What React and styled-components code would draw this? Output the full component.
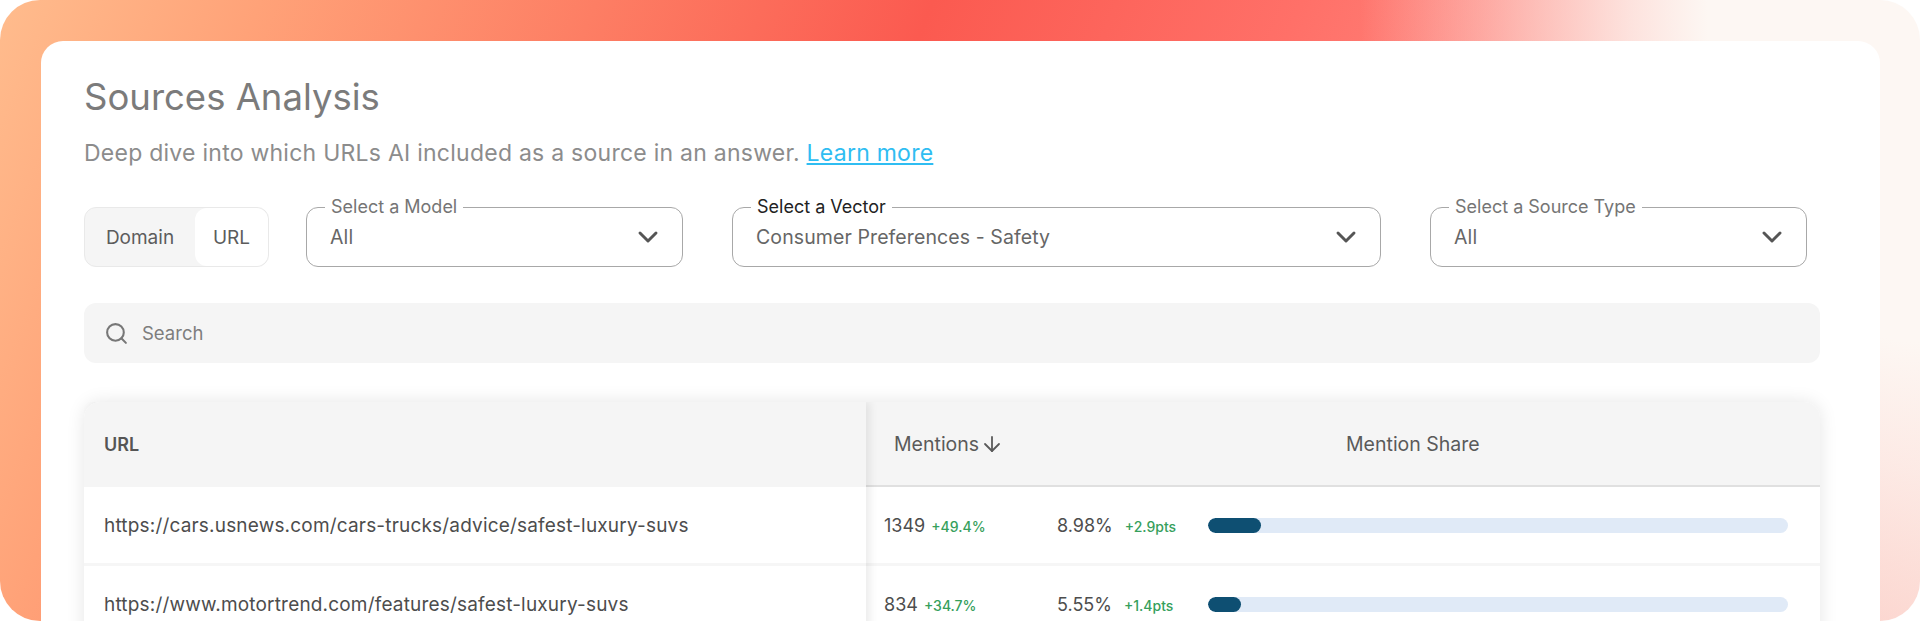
import React from "react";
import styled, { createGlobalStyle } from "styled-components";
import { ChevronDown, Search, ArrowDown } from "lucide-react";

const GlobalStyle = createGlobalStyle`
  html, body {
    margin: 0;
    padding: 0;
    background: #fff;
    font-family: "Inter", "Noto Sans", sans-serif;
  }
`;

const rows = [
  {
    url: "https://cars.usnews.com/cars-trucks/advice/safest-luxury-suvs",
    mentions: "1349",
    mentionsDelta: "+49.4%",
    share: "8.98%",
    shareDelta: "+2.9pts",
    fill: 9.2,
  },
  {
    url: "https://www.motortrend.com/features/safest-luxury-suvs",
    mentions: "834",
    mentionsDelta: "+34.7%",
    share: "5.55%",
    shareDelta: "+1.4pts",
    fill: 5.7,
  },
];

function App() {
  return (
    <>
      <GlobalStyle />
      <Frame>
        <Card>
          <Title>Sources Analysis</Title>
          <Subtitle>
            Deep dive into which URLs AI included as a source in an answer.{" "}
            <LearnMore href="#">Learn more</LearnMore>
          </Subtitle>

          <Filters>
            <Toggle>
              <ToggleOption>Domain</ToggleOption>
              <ToggleOption $active>URL</ToggleOption>
            </Toggle>
            <SelectBox $width="377px">
              <SelectLabel>Select a Model</SelectLabel>
              <SelectValue>All</SelectValue>
              <ChevronDown size={32} strokeWidth={2.2} color="#555" />
            </SelectBox>
            <SelectBox $width="649px" $focused>
              <SelectLabel>Select a Vector</SelectLabel>
              <SelectValue>Consumer Preferences - Safety</SelectValue>
              <ChevronDown size={32} strokeWidth={2.2} color="#555" />
            </SelectBox>
            <SelectBox $width="377px">
              <SelectLabel>Select a Source Type</SelectLabel>
              <SelectValue>All</SelectValue>
              <ChevronDown size={32} strokeWidth={2.2} color="#555" />
            </SelectBox>
          </Filters>

          <SearchBar>
            <Search size={25} strokeWidth={2} color="#777" />
            <SearchText>Search</SearchText>
          </SearchBar>

          <Table>
            <UrlColumn>
              <UrlHeader>URL</UrlHeader>
              {rows.map((row) => (
                <UrlCell key={row.url}>{row.url}</UrlCell>
              ))}
            </UrlColumn>
            <DataColumn>
              <DataHeader>
                <MentionsHead>
                  Mentions
                  <ArrowDown size={24} strokeWidth={1.8} />
                </MentionsHead>
                <ShareHead>Mention Share</ShareHead>
              </DataHeader>
              {rows.map((row) => (
                <DataRow key={row.url}>
                  <Metric>
                    <Value>{row.mentions}</Value>
                    <Delta>{row.mentionsDelta}</Delta>
                  </Metric>
                  <ShareMetric>
                    <Value>{row.share}</Value>
                    <Delta>{row.shareDelta}</Delta>
                  </ShareMetric>
                  <Bar>
                    <BarFill style={{ width: `${row.fill}%` }} />
                  </Bar>
                </DataRow>
              ))}
            </DataColumn>
          </Table>
        </Card>
      </Frame>
    </>
  );
}

const Frame = styled.div`
  height: 621px;
  box-sizing: border-box;
  padding: 41px 40px 0 41px;
  overflow: hidden;
  border-radius: 40px;
  background:
    radial-gradient(
      ellipse 560px 900px at 100% 0%,
      #fdf7f3 38%,
      rgba(253, 247, 243, 0.8) 52%,
      rgba(253, 247, 243, 0.6) 63%,
      rgba(253, 247, 243, 0.34) 78%,
      rgba(253, 247, 243, 0) 100%
    ),
    linear-gradient(
      112deg,
      #ffbc8d 0%,
      #ffa278 12%,
      #fb5a50 43%,
      #ff7068 60%,
      #fbbcb3 100%
    );
`;

const Card = styled.div`
  height: 640px;
  box-sizing: border-box;
  padding: 36px 60px 0 43px;
  background: #fff;
  border-radius: 22px 22px 0 0;
`;

const Title = styled.h1`
  margin: 0;
  font-size: 36.5px;
  line-height: 40px;
  font-weight: 400;
  color: #7b7b7b;
`;

const Subtitle = styled.p`
  margin: 21px 0 0;
  font-size: 23px;
  line-height: 30px;
  letter-spacing: 0.25px;
  color: #8c8c8c;
`;

const LearnMore = styled.a`
  color: #2fbdf2;
  text-decoration: underline;
`;

const Filters = styled.div`
  display: flex;
  gap: 49px;
  margin-top: 39px;
  align-items: flex-end;
`;

const Toggle = styled.div`
  display: flex;
  width: 185px;
  height: 60px;
  box-sizing: border-box;
  margin-right: -12px;
  border: 1px solid #e9e9e9;
  border-radius: 12px;
  background: #f5f5f5;
`;

const ToggleOption = styled.div`
  display: flex;
  align-items: center;
  justify-content: center;
  flex: ${(p) => (p.$active ? "0 0 73px" : "1")};
  font-size: 19px;
  color: #5c5c5c;
  border-radius: 12px;
  background: ${(p) => (p.$active ? "#fff" : "transparent")};
`;

const SelectBox = styled.fieldset`
  display: flex;
  align-items: center;
  justify-content: space-between;
  width: ${(p) => p.$width};
  height: 69px;
  box-sizing: border-box;
  margin: -9px 0 0;
  padding: 0 18px 8px 23px;
  border: 1px solid #a8a8a8;
  border-radius: 12px;
  color: ${(p) => (p.$focused ? "#222" : "#757575")};
`;

const SelectLabel = styled.legend`
  padding: 0 6px;
  margin-left: -5px;
  font-size: 18px;
  line-height: 18px;
`;

const SelectValue = styled.span`
  font-size: 19.5px;
  letter-spacing: 0.1px;
  color: #666;
`;

const SearchBar = styled.div`
  display: flex;
  align-items: center;
  gap: 13px;
  height: 60px;
  margin-top: 36px;
  padding: 0 20px;
  border-radius: 12px;
  background: #f5f5f5;
`;

const SearchText = styled.span`
  font-size: 18.5px;
  color: #7d7d7d;
`;

const Table = styled.div`
  display: grid;
  grid-template-columns: 782px 1fr;
  margin-top: 39px;
  border-radius: 16px 16px 0 0;
  box-shadow: 0 0 18px rgba(0, 0, 0, 0.1);
`;

const UrlColumn = styled.div`
  position: relative;
  z-index: 1;
  box-shadow: 4px 0 8px rgba(0, 0, 0, 0.08);
  clip-path: inset(0 -14px 0 0);
  border-radius: 16px 0 0 0;
`;

const UrlHeader = styled.div`
  display: flex;
  align-items: center;
  height: 85px;
  padding-left: 20px;
  border-radius: 16px 0 0 0;
  background: #f5f5f5;
  font-size: 18px;
  font-weight: 600;
  color: #555;
`;

const UrlCell = styled.div`
  display: flex;
  align-items: center;
  height: 76px;
  padding-left: 20px;
  background: #fff;
  border-bottom: 3px solid #f6f6f6;
  font-size: 19px;
  letter-spacing: 0.18px;
  color: #4d4d4d;
`;

const DataColumn = styled.div`
  min-width: 0;
`;

const DataHeader = styled.div`
  display: grid;
  grid-template-columns: 200px 1fr;
  align-items: center;
  height: 83px;
  border-bottom: 2px solid #e0e0e0;
  border-radius: 0 16px 0 0;
  background: #f5f5f5;
  font-size: 19.5px;
  color: #5a5a5a;
`;

const MentionsHead = styled.div`
  display: flex;
  align-items: center;
  gap: 1px;
  padding-left: 28px;
`;

const ShareHead = styled.div`
  padding-left: 280px;
`;

const DataRow = styled.div`
  display: grid;
  grid-template-columns: 173px 151px 1fr;
  align-items: center;
  height: 76px;
  padding: 0 32px 0 18px;
  background: #fff;
  border-bottom: 3px solid #f6f6f6;
`;

const Metric = styled.div`
  display: flex;
  align-items: baseline;
  gap: 6px;
`;

const ShareMetric = styled(Metric)`
  gap: 12px;
`;

const Value = styled.span`
  font-size: 18px;
  color: #4d4d4d;
`;

const Delta = styled.span`
  font-size: 14px;
  font-weight: 500;
  color: #36a05c;
`;

const Bar = styled.div`
  height: 15px;
  border-radius: 8px;
  background: #e0eaf7;
  overflow: hidden;
`;

const BarFill = styled.div`
  height: 100%;
  border-radius: 8px;
  background: #0e4f72;
`;

export default App;
